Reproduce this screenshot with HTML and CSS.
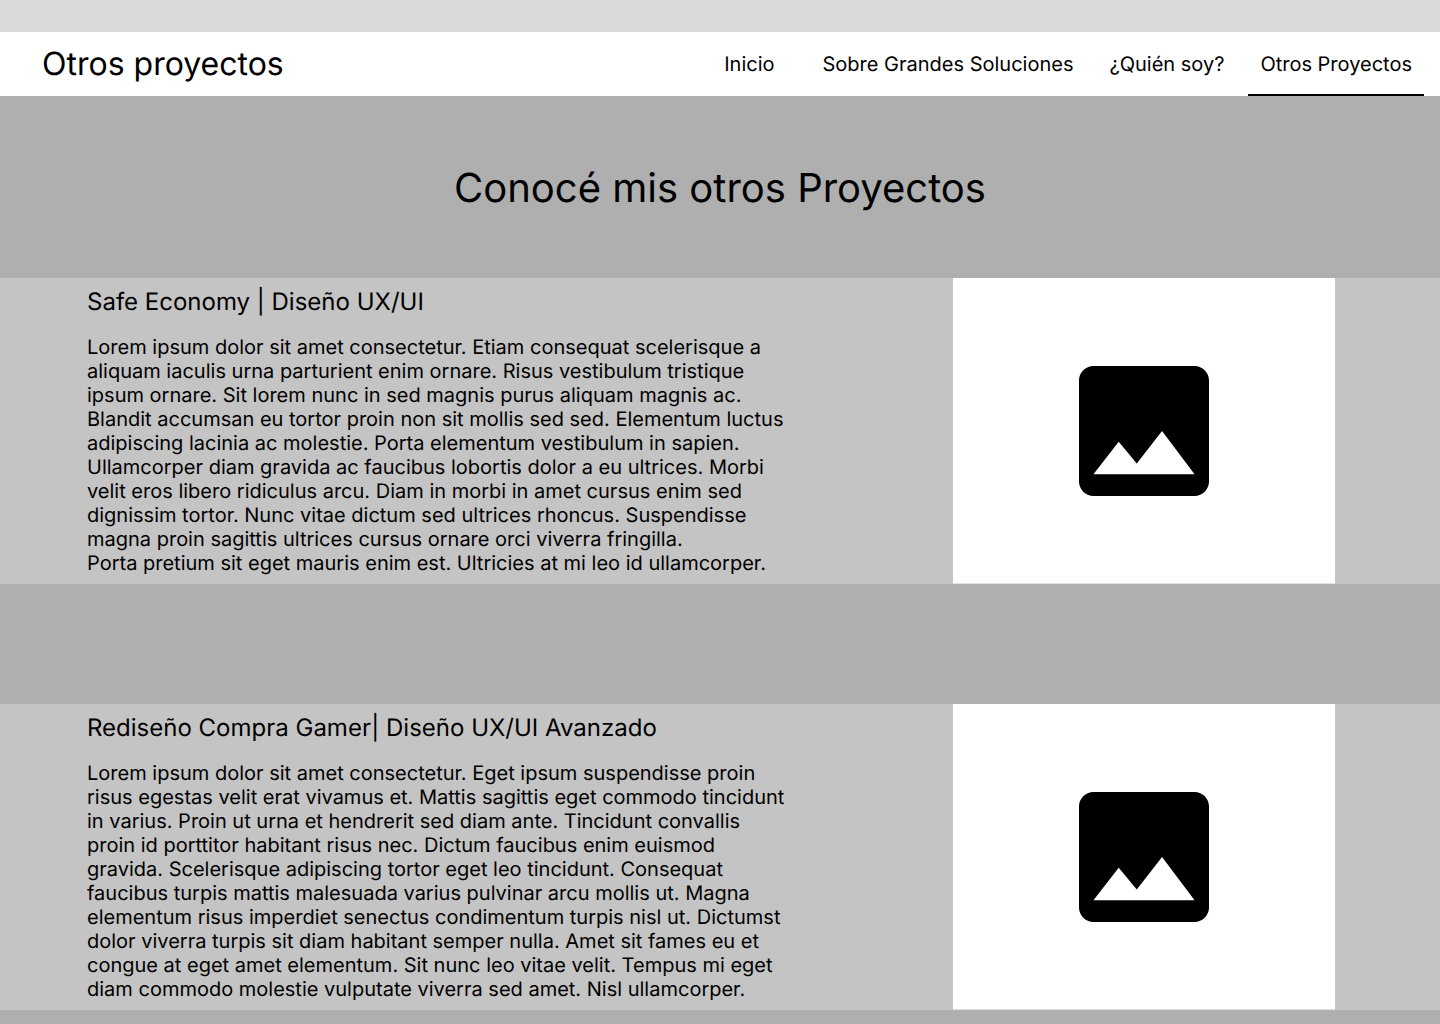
FILE: index.html
```html
<!DOCTYPE html>
<html lang="es">
<head>
<meta charset="utf-8">
<meta name="viewport" content="width=device-width, initial-scale=1">
<title>Otros proyectos</title>
<link rel="stylesheet" href="styles.css">
</head>
<body>
<div class="status-bar"></div>
<header class="header">
  <p class="brand">Otros proyectos</p>
  <nav class="nav" aria-label="Principal">
    <a class="nav-link" href="#inicio">Inicio</a>
    <a class="nav-link" href="#soluciones">Sobre Grandes Soluciones</a>
    <a class="nav-link" href="#quien-soy">¿Quién soy?</a>
    <a class="nav-link nav-link-active" href="#proyectos" aria-current="page">Otros Proyectos</a>
  </nav>
</header>
<main>
  <h1 class="title">Conocé mis otros Proyectos</h1>
  <section class="project">
    <div class="project-text">
      <h2 class="project-title">Safe Economy | Diseño UX/UI</h2>
      <p class="project-body">Lorem ipsum dolor sit amet consectetur. Etiam consequat scelerisque a aliquam iaculis urna parturient enim ornare. Risus vestibulum tristique ipsum ornare. Sit lorem nunc in sed magnis purus aliquam magnis ac. Blandit accumsan eu tortor proin non sit mollis sed sed. Elementum luctus adipiscing lacinia ac molestie. Porta elementum vestibulum in sapien. Ullamcorper diam gravida ac faucibus lobortis dolor a eu ultrices. Morbi velit eros libero ridiculus arcu. Diam in morbi in amet cursus enim sed dignissim tortor. Nunc vitae dictum sed ultrices rhoncus. Suspendisse magna proin sagittis ultrices cursus ornare orci viverra fringilla.<br>Porta pretium sit eget mauris enim est. Ultricies at mi leo id ullamcorper.</p>
    </div>
    <div class="project-image">
      <svg class="image-icon" viewBox="3 3 18 18" aria-hidden="true"><path d="M21 19V5c0-1.100-.9-2-2-2H5c-1.100 0-2 .9-2 2v14c0 1.100.9 2 2 2h14c1.100 0 2-.9 2-2zM8.500 13.500l2.500 3.010L14.500 12l4.500 6H5l3.500-4.500z"/></svg>
    </div>
  </section>
  <section class="project">
    <div class="project-text">
      <h2 class="project-title">Rediseño Compra Gamer| Diseño UX/UI Avanzado</h2>
      <p class="project-body">Lorem ipsum dolor sit amet consectetur. Eget ipsum suspendisse proin risus egestas velit erat vivamus et. Mattis sagittis eget commodo tincidunt in varius. Proin ut urna et hendrerit sed diam ante. Tincidunt convallis proin id porttitor habitant risus nec. Dictum faucibus enim euismod gravida. Scelerisque adipiscing tortor eget leo tincidunt. Consequat faucibus turpis mattis malesuada varius pulvinar arcu mollis ut. Magna elementum risus imperdiet senectus condimentum turpis nisl ut. Dictumst dolor viverra turpis sit diam habitant semper nulla. Amet sit fames eu et congue at eget amet elementum. Sit nunc leo vitae velit. Tempus mi eget diam commodo molestie vulputate viverra sed amet. Nisl ullamcorper.</p>
    </div>
    <div class="project-image">
      <svg class="image-icon" viewBox="3 3 18 18" aria-hidden="true"><path d="M21 19V5c0-1.100-.9-2-2-2H5c-1.100 0-2 .9-2 2v14c0 1.100.9 2 2 2h14c1.100 0 2-.9 2-2zM8.500 13.500l2.500 3.010L14.500 12l4.500 6H5l3.500-4.500z"/></svg>
    </div>
  </section>
</main>
</body>
</html>
```

FILE: styles.css
```css
* {
  box-sizing: border-box;
}

body {
  margin: 0;
  background: #afafaf;
  color: #000;
  font-family: Inter, "Liberation Sans", sans-serif;
  font-size: 20px;
  line-height: 24px;
  text-rendering: geometricPrecision;
}

h1, h2, p {
  margin: 0;
  font-weight: 400;
}

.status-bar {
  height: 32px;
  background: #d9d9d9;
}

.header {
  display: flex;
  justify-content: space-between;
  min-height: 64px;
  padding: 0 16px 0 42px;
  background: #fff;
}

.brand {
  font-size: 32px;
  line-height: 64px;
}

.nav {
  display: flex;
  gap: 12px;
}

.nav-link {
  padding: 0 12px;
  color: inherit;
  line-height: 64px;
  text-decoration: none;
}

.nav-link:first-child {
  margin-right: 12px;
}

.nav-link-active {
  box-shadow: inset 0 -2px #000;
}

.title {
  padding: 68px 24px 66px;
  font-size: 40px;
  line-height: 48px;
  text-align: center;
}

.project {
  display: flex;
  justify-content: space-between;
  gap: 48px;
  margin-bottom: 120px;
  padding: 0 105px 0 87px;
  background: #c4c4c4;
}

.project:last-child {
  margin-bottom: 14px;
}

.project-text {
  flex: 0 1 704px;
  padding: 8px 0 9px;
}

.project-title {
  margin-bottom: 17px;
  font-size: 24px;
  line-height: 32px;
}

.project-image {
  display: flex;
  flex: 0 0 382px;
  align-items: center;
  justify-content: center;
  border-bottom: 1px solid #e1e1e1;
  background: #fff;
}

.image-icon {
  width: 130px;
  height: 130px;
}
```
